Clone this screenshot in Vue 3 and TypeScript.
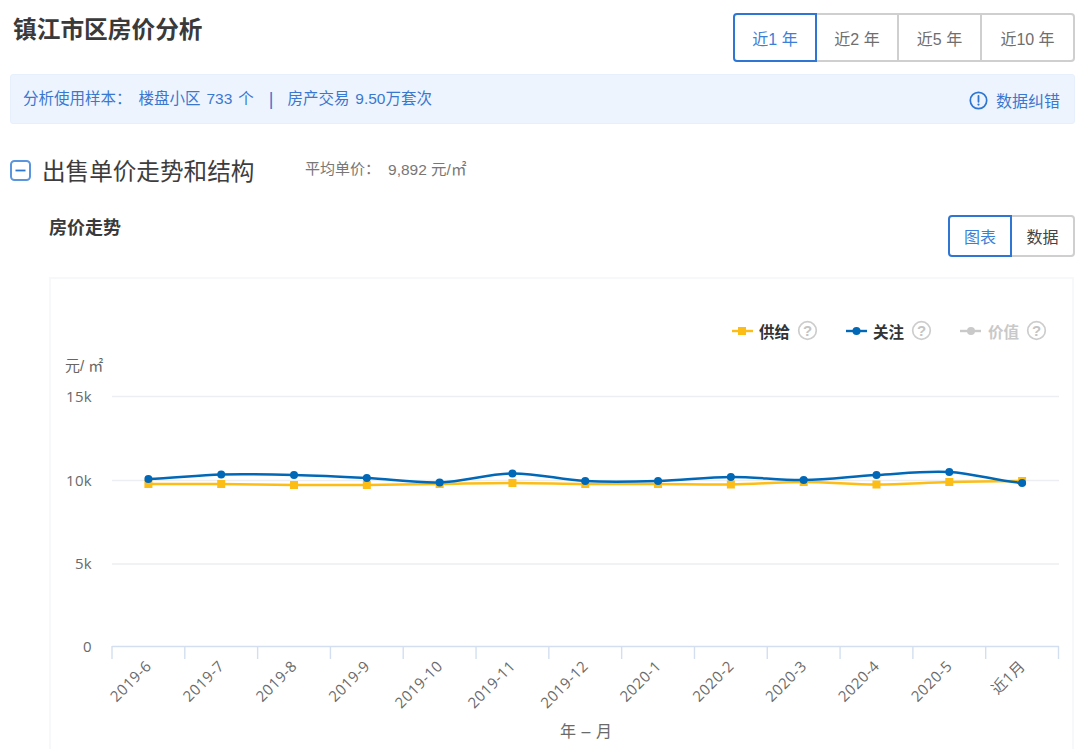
<script setup lang="ts">
const ranges = ['近1 年', '近2 年', '近5 年', '近10 年']
const labels = ['2019-6','2019-7','2019-8','2019-9','2019-10','2019-11','2019-12','2020-1','2020-2','2020-3','2020-4','2020-5','近1月']
const blue = [479,474.5,475,478,482.5,473.5,481,481,477,480,475,472,483]
const yellow = [484,484,485,485,484,483,484,484,484.5,482,484.5,482,481]
const x0 = 112
const step = (1058.5 - 112) / 13
const cx = (i: number) => x0 + step * (i + 0.5)
const ticks = Array.from({ length: 14 }, (_, i) => x0 + step * i)
const grid = [{ y: 396.5, t: '15k' }, { y: 480.5, t: '10k' }, { y: 564, t: '5k' }]

function smooth(ys: number[]): string {
  let d = `M${cx(0)} ${ys[0]}`
  for (let i = 0; i < ys.length - 1; i++) {
    const p0 = ys[Math.max(i - 1, 0)]
    const p1 = ys[i]
    const p2 = ys[i + 1]
    const p3 = ys[Math.min(i + 2, ys.length - 1)]
    const c1 = p1 + (p2 - p0) / 6
    const c2 = p2 - (p3 - p1) / 6
    d += ` C${cx(i) + step / 3} ${c1} ${cx(i + 1) - step / 3} ${c2} ${cx(i + 1)} ${p2}`
  }
  return d
}
const bluePath = smooth(blue)
const yellowPath = smooth(yellow)
</script>

<template>
  <div class="page">
    <header class="top">
      <h1 class="title">镇江市区房价分析</h1>
      <div class="ranges">
        <button v-for="(r, i) in ranges" :key="r" class="seg" :class="['r' + i, { on: i === 0 }]">{{ r }}</button>
      </div>
    </header>

    <div class="banner">
      <div class="sample">
        <span>分析使用样本：</span>
        <span class="s1">楼盘小区 733 个</span>
        <span class="sep">|</span>
        <span>房产交易 9.50万套次</span>
      </div>
      <div class="fix">
        <svg width="19" height="19" viewBox="0 0 19 19" fill="none">
          <circle cx="9.5" cy="9.5" r="8.2" stroke="#2f76d2" stroke-width="1.7" />
          <path d="M9.5 4.8v6" stroke="#2f76d2" stroke-width="1.8" stroke-linecap="round" />
          <circle cx="9.5" cy="13.6" r="1.1" fill="#2f76d2" />
        </svg>
        <span>数据纠错</span>
      </div>
    </div>

    <div class="section">
      <svg class="minus" width="21" height="21" viewBox="0 0 21 21" fill="none">
        <rect x="1" y="1" width="19" height="19" rx="3.5" stroke="#5b95dd" stroke-width="2" />
        <path d="M5.5 10.5h10" stroke="#2f76d2" stroke-width="1.8" />
      </svg>
      <h2 class="sec-title">出售单价走势和结构</h2>
      <div class="avg"><span>平均单价：</span><span class="avg-v">9,892 元/㎡</span></div>
    </div>

    <div class="sub">
      <h3 class="sub-title">房价走势</h3>
      <div class="views">
        <button class="seg v on">图表</button>
        <button class="seg v dark">数据</button>
      </div>
    </div>

    <div class="chart-box">
      <svg class="chart" width="1080" height="749" viewBox="0 0 1080 749">
        <g>
          <path d="M732 331h21" stroke="#fdbd17" stroke-width="2.4" />
          <rect x="738" y="327" width="8" height="8" fill="#fdbd17" />
          <text x="759" y="338" class="lg">供给</text>
          <circle cx="807.5" cy="330.5" r="8.8" class="q" />
          <text x="807.5" y="335.8" class="qt">?</text>

          <path d="M846 331h21" stroke="#0068b7" stroke-width="2.4" />
          <circle cx="856.5" cy="331" r="4" fill="#0068b7" />
          <text x="873" y="338" class="lg">关注</text>
          <circle cx="921.5" cy="330.5" r="8.8" class="q" />
          <text x="921.5" y="335.8" class="qt">?</text>

          <path d="M960 331h21" stroke="#c9c9c9" stroke-width="2.4" />
          <circle cx="971" cy="331" r="4" fill="#c9c9c9" />
          <text x="988" y="338" class="lg off">价值</text>
          <circle cx="1036.5" cy="330.5" r="8.8" class="q" />
          <text x="1036.5" y="335.8" class="qt">?</text>
        </g>

        <text x="65" y="371" class="unit">元/ ㎡</text>

        <g v-for="g in grid" :key="g.t">
          <path :d="`M${x0} ${g.y}H1059`" stroke="#eceef1" stroke-width="1.4" />
          <text x="92" :y="g.y + 5" text-anchor="end" class="tick">{{ g.t }}</text>
        </g>
        <text x="92" y="652" text-anchor="end" class="tick">0</text>

        <path :d="`M${x0} 646.5H1059`" stroke="#d3dff0" stroke-width="1.6" />
        <path v-for="t in ticks" :key="t" :d="`M${t} 646V659`" stroke="#d3dff0" stroke-width="1.4" />

        <text
          v-for="(l, i) in labels"
          :key="l"
          class="xl"
          text-anchor="end"
          :transform="`translate(${cx(i) + 4} 667) rotate(-45)`"
        >{{ l }}</text>

        <path :d="yellowPath" fill="none" stroke="#fdbd17" stroke-width="2.5" />
        <rect v-for="(y, i) in yellow" :key="'y' + i" :x="cx(i) - 4" :y="y - 4" width="8" height="8" fill="#fdbd17" />
        <path :d="bluePath" fill="none" stroke="#0068b7" stroke-width="2.5" />
        <circle v-for="(y, i) in blue" :key="'b' + i" :cx="cx(i)" :cy="y" r="4" fill="#0068b7" />

        <text x="586" y="737" text-anchor="middle" class="axis-name">年 – 月</text>
      </svg>
    </div>
  </div>
</template>

<style scoped>
.page {
  width: 1080px;
  height: 749px;
  overflow: hidden;
  background: #fff;
  box-sizing: border-box;
  padding: 13px 5px 0 10px;
  font-family: "Liberation Sans", "Noto Sans CJK SC", sans-serif;
  color: #333;
}
.top {
  display: flex;
  justify-content: space-between;
  align-items: flex-start;
  height: 61px;
}
.title {
  margin: 2px 0 0 3px;
  font-size: 23.7px;
  line-height: 30px;
  font-weight: 700;
  color: #3a3a3a;
}
.ranges,
.views {
  display: flex;
}
.seg {
  box-sizing: border-box;
  background: #fff;
  border: 2px solid #cfcfcf;
  margin-left: -2px;
  font: inherit;
  color: #6e6e6e;
  font-size: 16px;
  padding: 0;
  height: 49px;
  position: relative;
}
.r0 { width: 84px; border-radius: 4px 0 0 4px; }
.r1 { width: 84px; }
.r2 { width: 85px; }
.r3 { width: 95px; border-radius: 0 4px 4px 0; }
.seg.on {
  border-color: #2f76d2;
  color: #3a80d8;
  z-index: 1;
}
.banner {
  box-sizing: border-box;
  height: 50px;
  display: flex;
  justify-content: space-between;
  align-items: center;
  background: #edf4fe;
  border: 1px solid #e6f0fc;
  border-radius: 3px;
  padding: 0 14px 0 12px;
  color: #3a78d0;
  font-size: 15.5px;
}
.sample {
  display: flex;
  align-items: center;
  margin-top: -4px;
  word-spacing: 1.6px;
}
.s1 { margin-left: 7px; }
.sep {
  margin: 3px 14px 0 15px;
  font-size: 18px;
  line-height: 18px;
}
.fix {
  display: flex;
  align-items: center;
  gap: 8px;
  font-size: 16px;
  margin-top: 2px;
}
.section {
  display: flex;
  align-items: center;
  height: 42px;
  margin-top: 25px;
}
.minus { flex: none; }
.sec-title {
  margin: 0 0 0 11px;
  font-size: 23.6px;
  font-weight: 400;
  color: #3d3d3d;
  width: 263px;
  white-space: nowrap;
}
.avg {
  display: flex;
  font-size: 15px;
  color: #777;
  margin-top: -4px;
}
.avg-v { margin-left: 8px; font-size: 15.5px; }
.sub {
  display: flex;
  justify-content: space-between;
  margin-top: 24px;
  padding-left: 39px;
  height: 62px;
}
.sub-title {
  margin: 0;
  font-size: 18px;
  line-height: 26px;
  font-weight: 700;
  color: #3a3a3a;
}
.seg.v {
  width: 65px;
  height: 42px;
  font-size: 16px;
}
.seg.v.on { width: 64px; border-radius: 4px 0 0 4px; }
.seg.v.dark { border-radius: 0 4px 4px 0; color: #444; }
.chart-box {
  box-sizing: border-box;
  margin-left: 40px;
  margin-right: 0;
  height: 480px;
  border: 2px solid #f7f8fa;
  border-bottom: 0;
  position: relative;
  left: -1px;
}
.chart {
  position: absolute;
  left: -51px;
  top: -279px;
}
.lg {
  font-size: 15.5px;
  font-weight: 700;
  fill: #333;
}
.lg.off { fill: #c9c9c9; }
.q {
  fill: none;
  stroke: #cdcdcd;
  stroke-width: 1.7;
}
.qt {
  fill: #c4c4c4;
  font-size: 15px;
  font-weight: 700;
  text-anchor: middle;
}
.unit {
  font-size: 15px;
  fill: #666;
}
.tick {
  font-family: "Open Sans", "Noto Sans CJK SC", sans-serif;
  font-size: 15px;
  letter-spacing: 0.3px;
  fill: #6a6a6a;
}
.xl {
  font-family: "Open Sans", "Noto Sans CJK SC", sans-serif;
  font-size: 15px;
  letter-spacing: 0.5px;
  fill: #6a6a6a;
}
.axis-name {
  font-size: 16px;
  word-spacing: 1px;
  fill: #6a6a6a;
}
</style>
